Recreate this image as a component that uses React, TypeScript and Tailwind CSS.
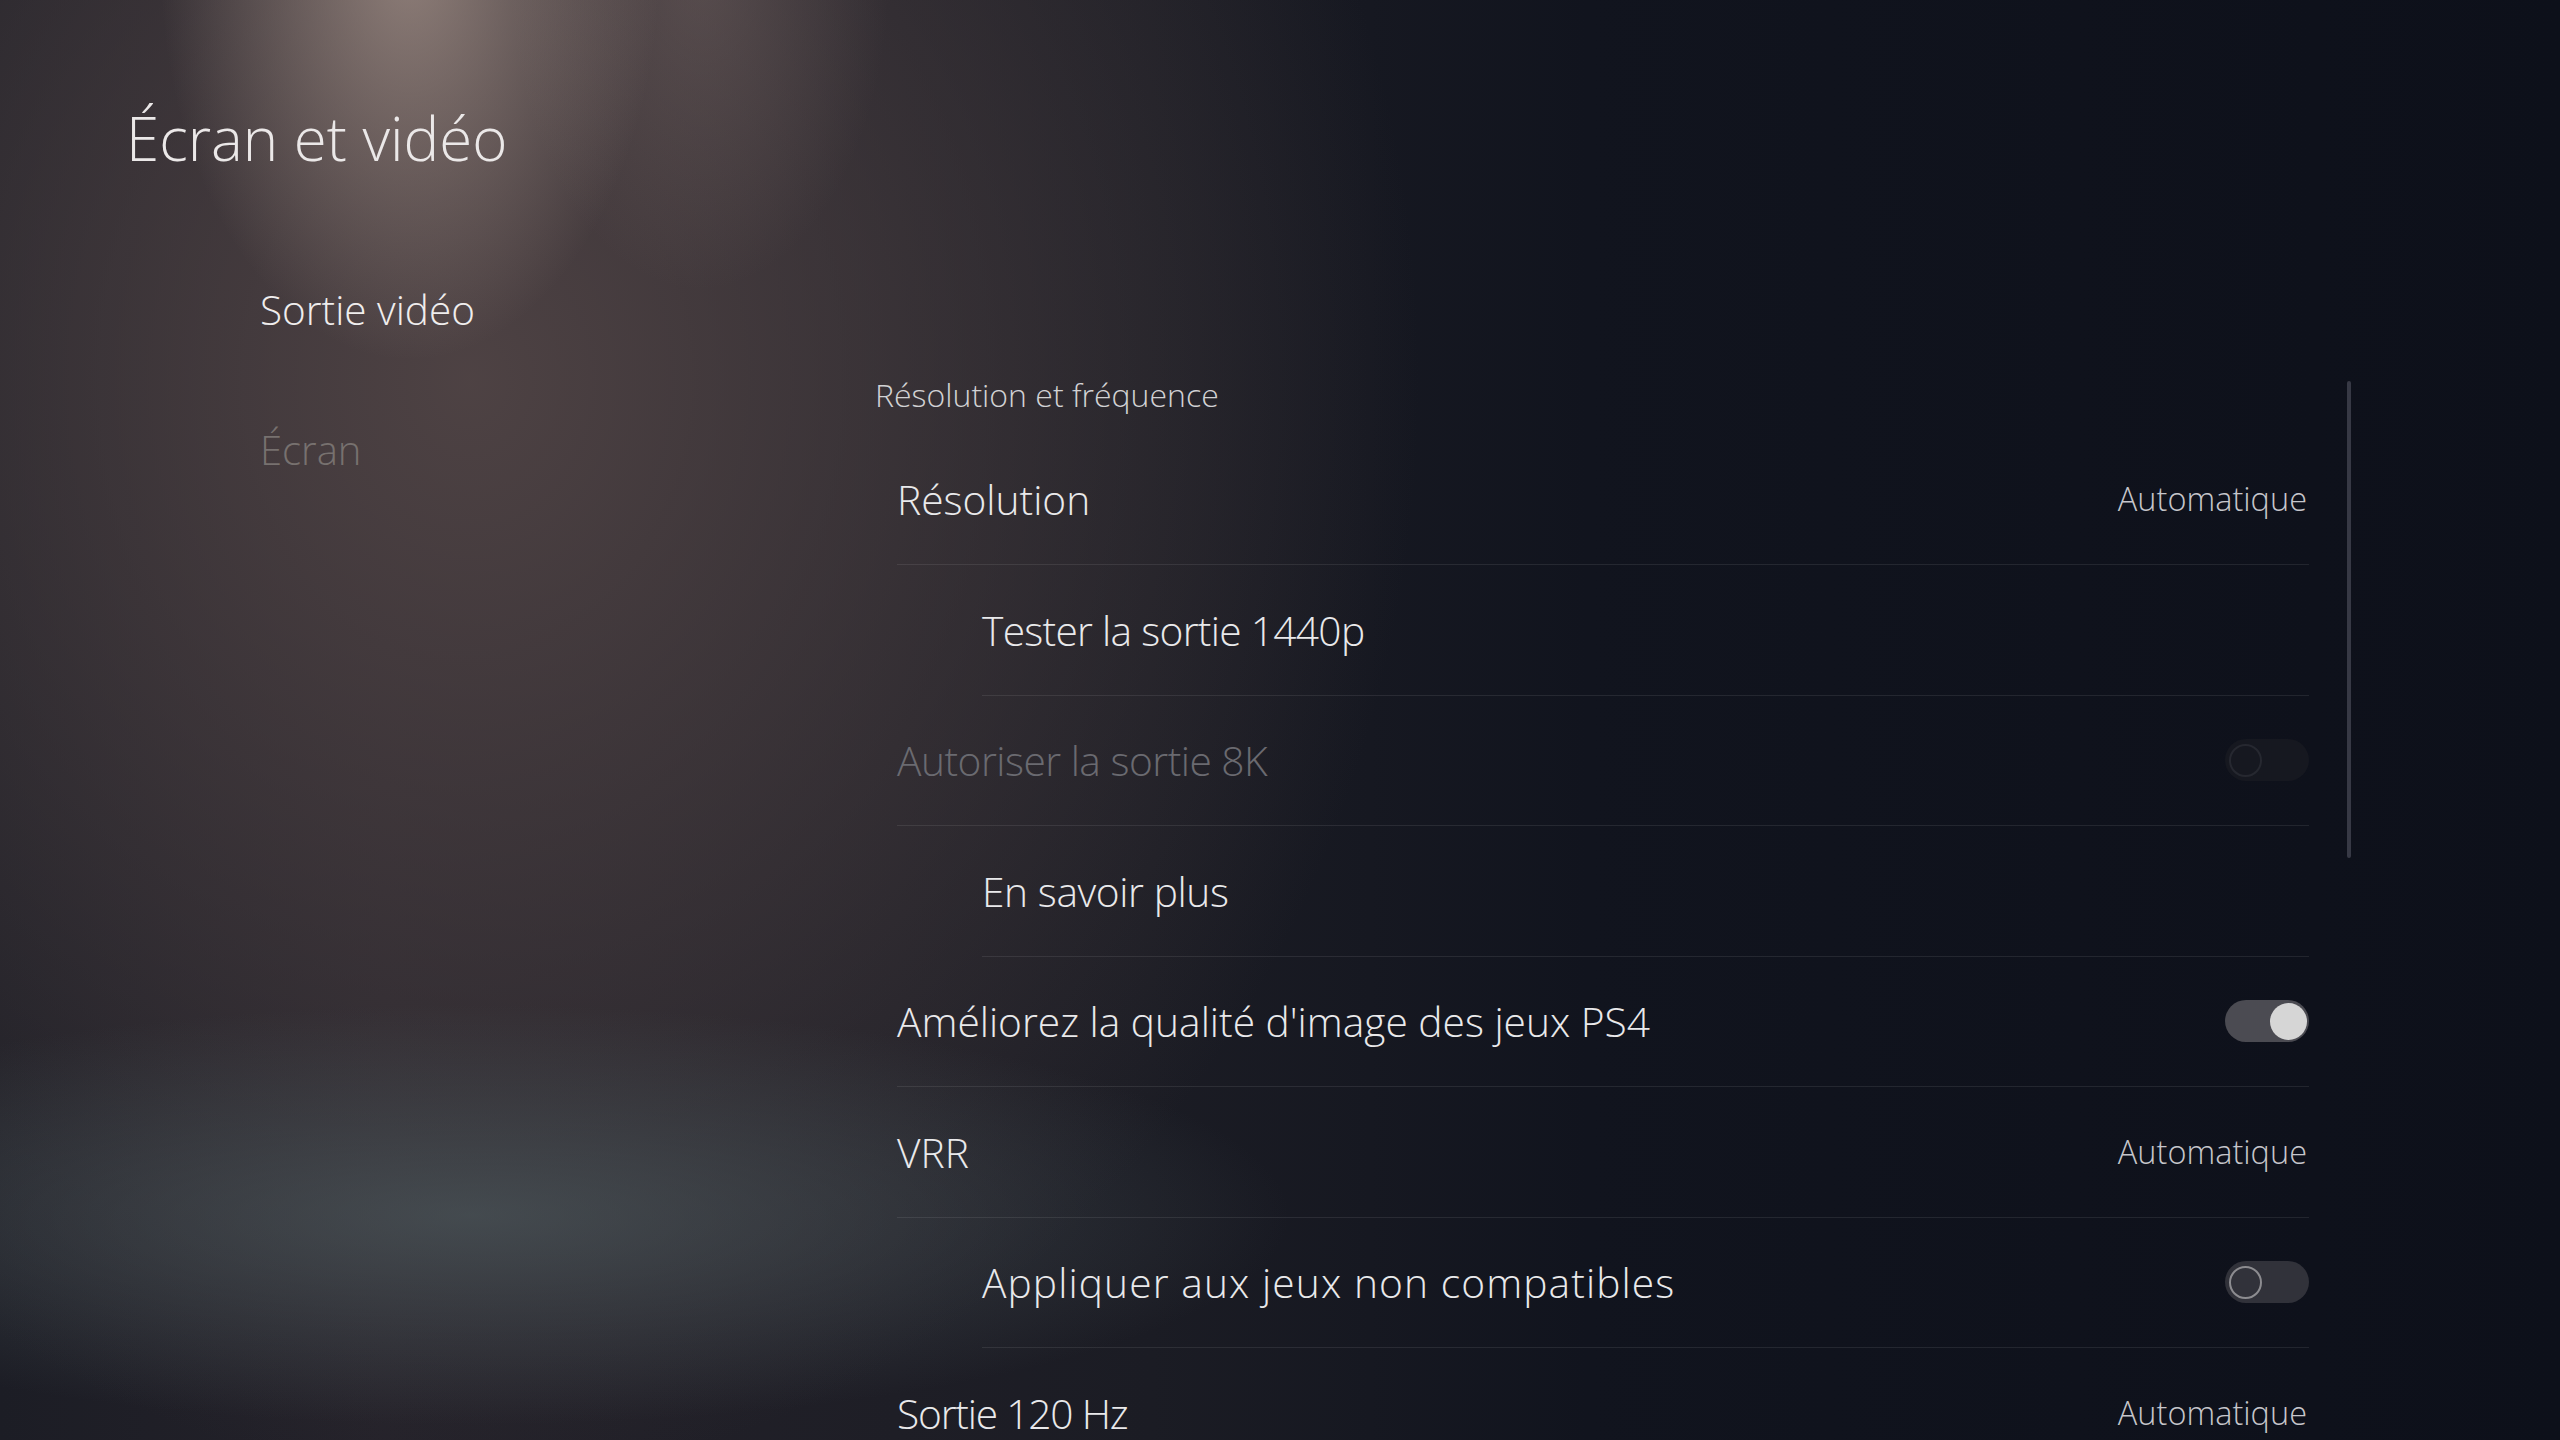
type Row = {
  label: string;
  indent?: boolean;
  dim?: boolean;
  value?: string;
  toggle?: 'on' | 'off' | 'disabled';
  tracking?: string;
};

// tracking nudges keep line lengths close to the console's own typeface
const rows: Row[] = [
  { label: 'Résolution', value: 'Automatique' },
  { label: 'Tester la sortie 1440p', indent: true, tracking: 'tracking-[-0.7px]' },
  { label: 'Autoriser la sortie 8K', dim: true, toggle: 'disabled', tracking: 'tracking-[-0.5px]' },
  { label: 'En savoir plus', indent: true, tracking: 'tracking-[-0.4px]' },
  { label: "Améliorez la qualité d'image des jeux PS4", toggle: 'on' },
  { label: 'VRR', value: 'Automatique' },
  { label: 'Appliquer aux jeux non compatibles', indent: true, toggle: 'off', tracking: 'tracking-[1.1px]' },
  { label: 'Sortie 120 Hz', value: 'Automatique', tracking: 'tracking-[-1.2px]' },
];

const Toggle = ({ state }: { state: 'on' | 'off' | 'disabled' }) => {
  if (state === 'on') {
    return (
      <div className="flex h-[42px] w-[84px] items-center justify-end rounded-full bg-[#4b4b52] pr-[2px]">
        <div className="h-[37px] w-[37px] rounded-full bg-[#d6d6d6]" />
      </div>
    );
  }
  if (state === 'off') {
    return (
      <div className="flex h-[42px] w-[84px] items-center rounded-full bg-[#31323a] pl-[4px]">
        <div className="h-[33px] w-[33px] rounded-full border-2 border-[#8c8c90]" />
      </div>
    );
  }
  return (
    <div className="flex h-[42px] w-[84px] items-center rounded-full bg-[#161820] pl-[4px]">
      <div className="h-[33px] w-[33px] rounded-full border-2 border-[#262830]" />
    </div>
  );
};

const App = () => {
  return (
    <div className="relative h-[1440px] w-[2560px] overflow-hidden bg-[#0e111b] font-['Open_Sans','Noto_Sans',sans-serif] font-light text-[#ececec]">
      {/* backdrop */}
      <div className="absolute inset-0 bg-[radial-gradient(ellipse_250px_400px_at_410px_-40px,rgba(180,160,150,0.68),rgba(180,160,150,0)_100%),radial-gradient(ellipse_190px_320px_at_700px_-30px,rgba(150,130,125,0.32),rgba(150,130,125,0)_100%),radial-gradient(ellipse_820px_210px_at_470px_1215px,rgba(80,92,96,0.65),rgba(80,92,96,0)_100%),radial-gradient(ellipse_950px_1100px_at_470px_380px,rgba(80,68,69,0.95),rgba(80,68,69,0)_100%),linear-gradient(90deg,#1c1d25_0%,#24222a_15%,#1b1c24_45%,#11141e_62%,#0d101a_100%)]" />

      <div className="relative">
        <h1 className="h-[174px] pl-[126px] pt-[103px] text-[60px] leading-[70px] text-[#ebe8e8]">Écran et vidéo</h1>

        <div className="flex">
          <nav className="flex w-[875px] flex-col pl-[260px] pt-[111px]">
            <div className="h-[50px] text-[40.5px] leading-[50px] text-[#efeded]">Sortie vidéo</div>
            <div className="mt-[90px] h-[50px] text-[40px] leading-[50px] text-[#77716f]">Écran</div>
          </nav>

          <div className="flex">
            <main className="w-[1434px] pt-[196px]">
              <div className="h-[50px] text-[32px] leading-[50px] text-[#d2d2d4]">Résolution et fréquence</div>
              <div className="mt-[14.5px] pl-[22px]">
                {rows.map((r) => (
                  <div key={r.label} className={r.indent ? 'pl-[85px]' : ''}>
                    <div className="flex h-[130.5px] items-center justify-between border-b border-[rgba(255,255,255,0.085)]">
                      <span
                        className={`text-[40.7px] leading-[44px] ${r.dim ? 'text-[#6a6a70]' : 'text-[#e9e9eb]'} ${r.tracking ?? ''}`}
                      >
                        {r.label}
                      </span>
                      {r.value && (
                        <span className="pr-[2px] text-[32.5px] leading-[44px] text-[#c6c6cb]">{r.value}</span>
                      )}
                      {r.toggle && <Toggle state={r.toggle} />}
                    </div>
                  </div>
                ))}
              </div>
            </main>
            <div className="ml-[38px] mt-[207px] h-[477px] w-[4px] rounded-full bg-[#373945]" />
          </div>
        </div>
      </div>
    </div>
  );
};

export default App;
